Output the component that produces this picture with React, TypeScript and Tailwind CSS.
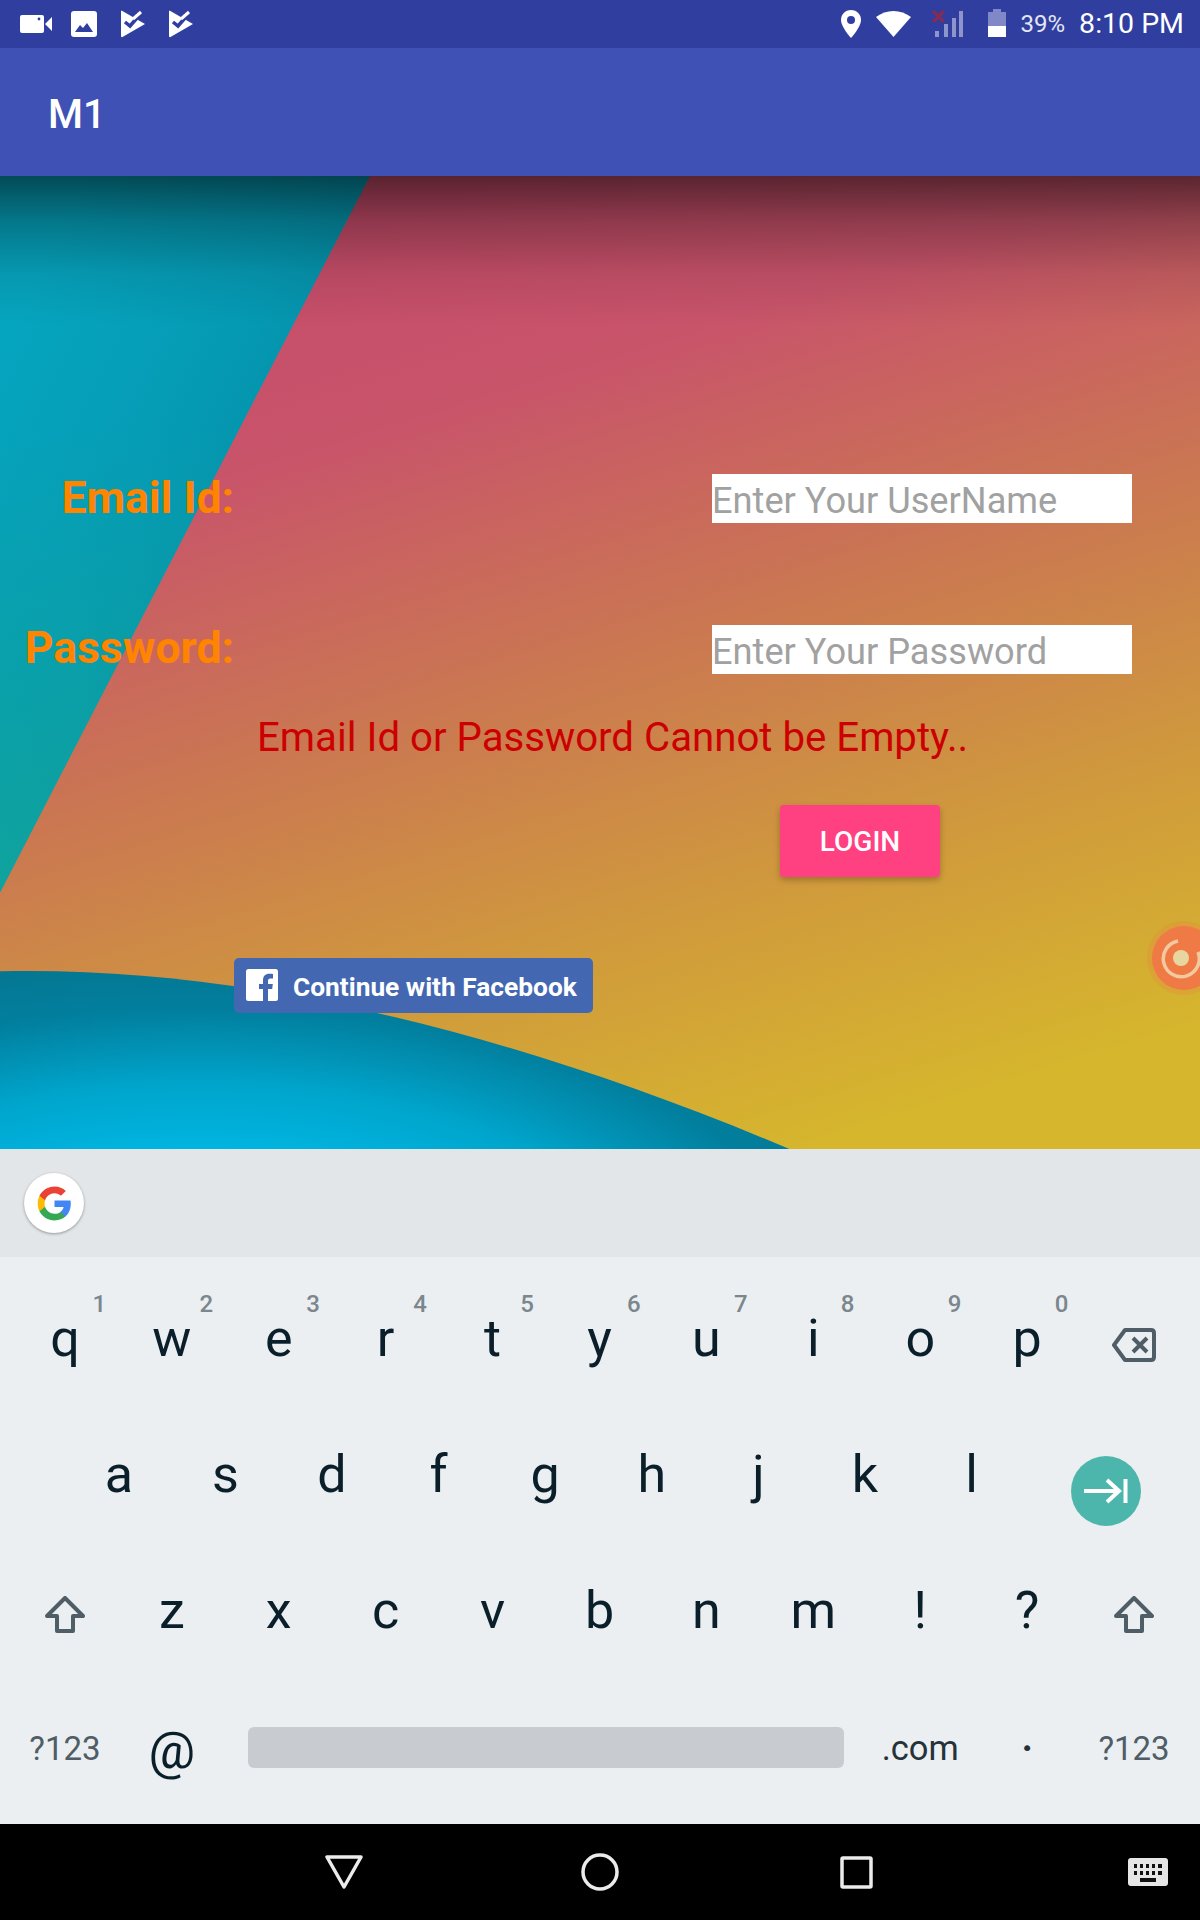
import React from "react";

const roboto = "font-['Roboto',sans-serif]";

function StatusLeft() {
  const play = (
    <svg width="26" height="28" viewBox="0 0 26 28">
      <path d="M1.500 0.500 Q1 0.500 1 2 V26 Q1 27.500 2.500 27 L25 14 L1.500 0.500 Z" fill="#fff" />
      <path d="M12 0 L26 0 L26 10 L18 8 Z" fill="#303f9f" />
      <path d="M5 12 L10 16 L17 8" fill="none" stroke="#303f9f" strokeWidth="3.500" />
      <path d="M13 9 L21 2" fill="none" stroke="#fff" strokeWidth="3" />
    </svg>
  );
  return (
    <div className="flex items-center">
      <svg width="33" height="20" viewBox="0 0 33 20" className="ml-[20px] fill-white">
        <rect x="0" y="1" width="24" height="18" rx="2" />
        <path d="M25 10 L32 3 V17 Z" />
        <circle cx="19" cy="5" r="1.400" fill="#303f9f" />
      </svg>
      <svg width="26" height="26" viewBox="0 0 26 26" className="ml-[18px]">
        <rect width="26" height="26" rx="3" fill="#fff" />
        <path d="M4 21 L9 14 L12 17 L16 12 L22 21 Z" fill="#303f9f" />
      </svg>
      <span className="ml-[23px] flex">{play}</span>
      <span className="ml-[22px] flex">{play}</span>
    </div>
  );
}

function StatusRight() {
  return (
    <div className="flex items-center">
      <svg width="20" height="28" viewBox="0 0 20 28" className="translate-x-[1px]">
        <path d="M10 0 C4 0 0 4.500 0 10 C0 17 10 28 10 28 C10 28 20 17 20 10 C20 4.500 16 0 10 0 Z" fill="#fff" />
        <circle cx="10" cy="10" r="4" fill="#303f9f" />
      </svg>
      <svg width="35" height="26" viewBox="0 0 35 26" className="ml-[16px]">
        <path d="M17.500 26 L0 6 Q8 0 17.500 0 Q27 0 35 6 Z" fill="#fff" />
      </svg>
      <svg width="32" height="28" viewBox="0 0 32 28" className="ml-[21px]">
        <rect x="3" y="21" width="4" height="6" fill="#fff" opacity=".45" />
        <rect x="12" y="14" width="4" height="13" fill="#fff" opacity=".45" />
        <rect x="20" y="8" width="4" height="19" fill="#fff" opacity=".45" />
        <rect x="27" y="1" width="4" height="26" fill="#fff" opacity=".45" />
        <path d="M1 1 L12 12 M12 1 L1 12" stroke="#8b2a4e" strokeWidth="3" />
      </svg>
      <svg width="20" height="29" viewBox="0 0 20 29" className="ml-[23px]">
        <path d="M6 0 H14 V3 H19 V28 H1 V3 H6 Z" fill="#8088c8" />
        <rect x="1" y="17" width="18" height="11" fill="#fff" />
      </svg>
      <span className="ml-[14px] text-[24px] leading-none text-[#e4e6f3]">39%</span>
      <span className="mr-[16px] ml-[14px] text-[28.500px] leading-none text-white">8:10 PM</span>
    </div>
  );
}

function Wallpaper() {
  return (
    <svg className="absolute inset-0 h-full w-full" viewBox="0 0 1200 974" preserveAspectRatio="none">
      <defs>
        <linearGradient id="main" gradientUnits="userSpaceOnUse" x1="500" y1="0" x2="800" y2="974">
          <stop offset="0" stopColor="#c64c6a" />
          <stop offset="0.2" stopColor="#c8546a" />
          <stop offset="0.5" stopColor="#cb7a50" />
          <stop offset="0.75" stopColor="#d09a3c" />
          <stop offset="1" stopColor="#d6b62d" />
        </linearGradient>
        <linearGradient id="teal" gradientUnits="userSpaceOnUse" x1="0" y1="170" x2="300" y2="320">
          <stop offset="0" stopColor="#06a5bf" />
          <stop offset="0.6" stopColor="#059ab4" />
          <stop offset="1" stopColor="#058ea6" />
        </linearGradient>
        <linearGradient id="tealDown" gradientUnits="userSpaceOnUse" x1="0" y1="250" x2="0" y2="800">
          <stop offset="0" stopColor="#0fa69f" stopOpacity="0" />
          <stop offset="1" stopColor="#12a59a" stopOpacity="1" />
        </linearGradient>
        <radialGradient id="blue" gradientUnits="userSpaceOnUse" cx="0" cy="0" r="1" gradientTransform="translate(200 1090) scale(700 300)">
          <stop offset="0.3" stopColor="#00bbe8" />
          <stop offset="0.6" stopColor="#00a5cc" />
          <stop offset="0.85" stopColor="#027f9e" />
          <stop offset="1" stopColor="#047893" />
        </radialGradient>
        <linearGradient id="shade" gradientUnits="userSpaceOnUse" x1="0" y1="0" x2="0" y2="150">
          <stop offset="0" stopColor="#000" stopOpacity=".55" />
          <stop offset="0.3" stopColor="#000" stopOpacity=".28" />
          <stop offset="0.65" stopColor="#000" stopOpacity=".08" />
          <stop offset="1" stopColor="#000" stopOpacity="0" />
        </linearGradient>
      </defs>
      <rect width="1200" height="974" fill="url(#main)" />
      <path d="M370 0 L0 717 V0 Z" fill="url(#teal)" />
      <path d="M370 0 L0 717 V0 Z" fill="url(#tealDown)" />
      <path d="M0 796 C250 790 520 860 790 974 H0 Z" fill="url(#blue)" />
      <rect width="1200" height="150" fill="url(#shade)" />
    </svg>
  );
}

function Field({ label, text, className, labelClass }: { label: string; text: string; className?: string; labelClass: string }) {
  return (
    <div className={`flex h-[49px] items-center ${className ?? ""}`}>
      <span className={`w-[234px] text-right text-[44.500px] leading-none font-bold text-[#ff8400] ${labelClass}`}>{label}</span>
      <div className="ml-[478px] flex h-[49px] w-[420px] items-center bg-white pt-[5px] text-[36.200px] leading-none text-[#a1a1a1]">{text}</div>
    </div>
  );
}

function Form() {
  return (
    <div className={`relative h-[974px] overflow-hidden ${roboto}`}>
      <Wallpaper />
      <div className="relative flex flex-col pt-[298px]">
        <Field label="Email Id:" text="Enter Your UserName" labelClass="-mt-[1px]" />
        <Field label="Password:" text="Enter Your Password" labelClass="-mt-[3px]" className="mt-[102px]" />
        <div className="mt-[41px] pl-[257px] text-[40.200px] leading-[46px] text-[#cc0000]">Email Id or Password Cannot be Empty..</div>
        <div className="mt-[44px] pl-[780px]">
          <button className="flex h-[72px] w-[160px] items-center justify-center rounded-[4px] bg-[#ff4081] pt-[2px] text-[28px] font-medium text-white shadow-[0_3px_6px_rgba(0,0,0,0.25)]">LOGIN</button>
        </div>
        <div className="mt-[81px] pl-[234px]">
          <div className="flex h-[55px] w-[359px] items-center rounded-[5px] bg-[#4368b1] pl-[12px] text-white">
            <svg width="32" height="32" viewBox="0 0 32 32">
              <rect width="32" height="32" rx="2.500" fill="#fff" />
              <path d="M22 32 V20 h4.200 l.6-5 H22 v-3 c0-1.500.4-2.500 2.500-2.500 H27 V5 c-.5 0-2-.2-3.800-.2 -3.800 0-6.200 2.300-6.200 6.500 V15 H13 v5 h4 v12 Z" fill="#4368b1" />
            </svg>
            <span className="ml-[15px] pt-[3px] text-[26.300px] leading-none font-bold">Continue with Facebook</span>
          </div>
        </div>
      </div>
      <svg width="76" height="76" viewBox="0 0 76 76" className="absolute top-[744px] left-[1146px]">
        <circle cx="38" cy="38" r="37" fill="#ef7a45" opacity=".25" />
        <circle cx="38" cy="38" r="32" fill="#ef7a45" />
        <circle cx="35" cy="38" r="8" fill="#e8d6a0" />
        <path d="M32 21 A 18 18 0 1 0 52 32" fill="none" stroke="#f3c9a0" strokeWidth="3.500" />
      </svg>
    </div>
  );
}

function GoogleG() {
  return (
    <svg width="37" height="37" viewBox="0 0 48 48">
      <path fill="#4285F4" d="M45.100 24.500c0-1.600-.1-3.100-.4-4.500H24v8.500h11.800c-.5 2.700-2 5-4.400 6.600v5.500h7.100c4.200-3.800 6.600-9.500 6.600-16.100z" />
      <path fill="#34A853" d="M24 46c5.900 0 10.900-2 14.500-5.300l-7.100-5.500c-2 1.300-4.500 2.100-7.400 2.100-5.700 0-10.500-3.800-12.200-9H4.500v5.700C8.100 41.100 15.500 46 24 46z" />
      <path fill="#FBBC05" d="M11.800 28.300c-.4-1.300-.7-2.800-.7-4.300s.3-3 .7-4.300V14H4.500C3 17 2.200 20.400 2.200 24s.8 7 2.300 10l7.300-5.700z" />
      <path fill="#EA4335" d="M24 10.700c3.200 0 6.100 1.100 8.400 3.300l6.300-6.300C34.900 4.200 29.900 2 24 2 15.500 2 8.100 6.900 4.500 14l7.300 5.700c1.700-5.200 6.500-9 12.200-9z" />
    </svg>
  );
}

function Letter({ ch, hint }: { ch: string; hint?: string }) {
  return (
    <div className="relative flex h-[136px] flex-1 items-center justify-center">
      <span className="-mt-[2px] text-[52px] leading-none text-[#0b1f2a]">{ch}</span>
      {hint && <span className="absolute top-[20px] left-[81px] text-[24px] leading-none font-medium text-[#7b868d]">{hint}</span>}
    </div>
  );
}

function Shift() {
  return (
    <div className="flex h-[136px] flex-1 items-center justify-center pt-[5px]">
      <svg width="40" height="38" viewBox="0 0 40 38" fill="none" stroke="#4f5d66" strokeWidth="4" strokeLinejoin="round">
        <path d="M20 2 L38 20 H28 V35 H12 V20 H2 Z" />
      </svg>
    </div>
  );
}

function Keyboard() {
  const top = [["q", "1"], ["w", "2"], ["e", "3"], ["r", "4"], ["t", "5"], ["y", "6"], ["u", "7"], ["i", "8"], ["o", "9"], ["p", "0"]];
  return (
    <div className={`bg-[#ebeff2] ${roboto}`}>
      <div className="flex h-[108px] items-center bg-[#e2e6e9] pl-[24px]">
        <div className="flex size-[60px] items-center justify-center rounded-full bg-white shadow-[0_1px_3px_rgba(0,0,0,0.35)]">
          <GoogleG />
        </div>
      </div>
      <div className="flex h-[567px] flex-col pt-[15px] pr-[12.500px] pl-[11.500px]">
        <div className="flex">
          {top.map(([c, h]) => <Letter key={c} ch={c} hint={h} />)}
          <div className="flex h-[136px] flex-1 items-center justify-center pt-[10px]">
            <svg width="44" height="34" viewBox="0 0 44 34" fill="none" stroke="#4f5d66" strokeWidth="4" strokeLinejoin="round">
              <path d="M13 2 H39 q3 0 3 3 V29 q0 3 -3 3 H13 L2 17 Z" />
              <path d="M21 10 L35 24 M35 10 L21 24" />
            </svg>
          </div>
        </div>
        <div className="flex pl-[54px]">
          {"asdfghjkl".split("").map((c) => <div key={c} className="w-[106.600px]"><Letter ch={c} /></div>)}
          <div className="flex h-[136px] flex-1 items-center justify-center pt-[30px]">
            <div className="flex size-[70px] items-center justify-center rounded-full bg-[#4db6ac]">
              <svg width="44" height="26" viewBox="0 0 44 26" fill="none" stroke="#fff" strokeWidth="4">
                <path d="M0 13 H35 M23 2 L35 13 L23 24" />
                <path d="M41.500 1 V25" />
              </svg>
            </div>
          </div>
        </div>
        <div className="flex">
          <Shift />
          {"zxcvbnm!?".split("").map((c) => <Letter key={c} ch={c} />)}
          <Shift />
        </div>
        <div className="flex h-[136px] items-center">
          <span className="w-[107px] text-center text-[33px] leading-none text-[#4f5d66]">?123</span>
          <span className="w-[107px] pt-[6px] text-center text-[52px] leading-none text-[#0b1f2a]">@</span>
          <div className="mx-[23px] -mt-[2px] h-[41px] w-[596px] rounded-[6px] bg-[#c8ccd0]" />
          <span className="w-[107px] text-center text-[34.500px] leading-none text-[#263238]">.com</span>
          <span className="w-[107px] text-center text-[38px] leading-none font-bold text-[#263238]">·</span>
          <span className="w-[107px] text-center text-[33px] leading-none text-[#4f5d66]">?123</span>
        </div>
      </div>
    </div>
  );
}

function NavBar() {
  return (
    <div className="flex h-[96px] items-center bg-black pl-[325px]">
      <svg width="38" height="34" viewBox="0 0 38 34" fill="none" stroke="#ececec" strokeWidth="3.500" strokeLinejoin="round">
        <path d="M2 2 H36 L19 32 Z" />
      </svg>
      <svg width="38" height="38" viewBox="0 0 38 38" fill="none" stroke="#ececec" strokeWidth="3.500" className="ml-[218px]">
        <circle cx="19" cy="19" r="17" />
      </svg>
      <svg width="33" height="33" viewBox="0 0 33 33" fill="none" stroke="#ececec" strokeWidth="3.500" className="ml-[221px]">
        <rect x="2" y="2" width="29" height="29" rx="1" />
      </svg>
      <svg width="40" height="28" viewBox="0 0 40 28" className="ml-[255px]">
        <rect width="40" height="28" rx="3" fill="#e6e6e6" />
        <path d="M6 6h3v4H6zM12 6h3v4h-3zM18 6h3v4h-3zM24 6h3v4h-3zM30 6h4v4h-4zM6 13h3v4H6zM12 13h3v4h-3zM18 13h3v4h-3zM24 13h3v4h-3zM30 13h4v4h-4zM12 20h16v4H12z" fill="#111" />
      </svg>
    </div>
  );
}

export default function App() {
  return (
    <div className={`flex h-[1920px] w-[1200px] flex-col overflow-hidden ${roboto}`}>
      <div className="flex h-[48px] items-center justify-between bg-[#303f9f]">
        <StatusLeft />
        <StatusRight />
      </div>
      <div className="relative z-10 flex h-[128px] items-center bg-[#3f51b5] pt-[6px] pl-[48px] text-[40px] font-medium text-white">M1</div>
      <Form />
      <Keyboard />
      <NavBar />
    </div>
  );
}
